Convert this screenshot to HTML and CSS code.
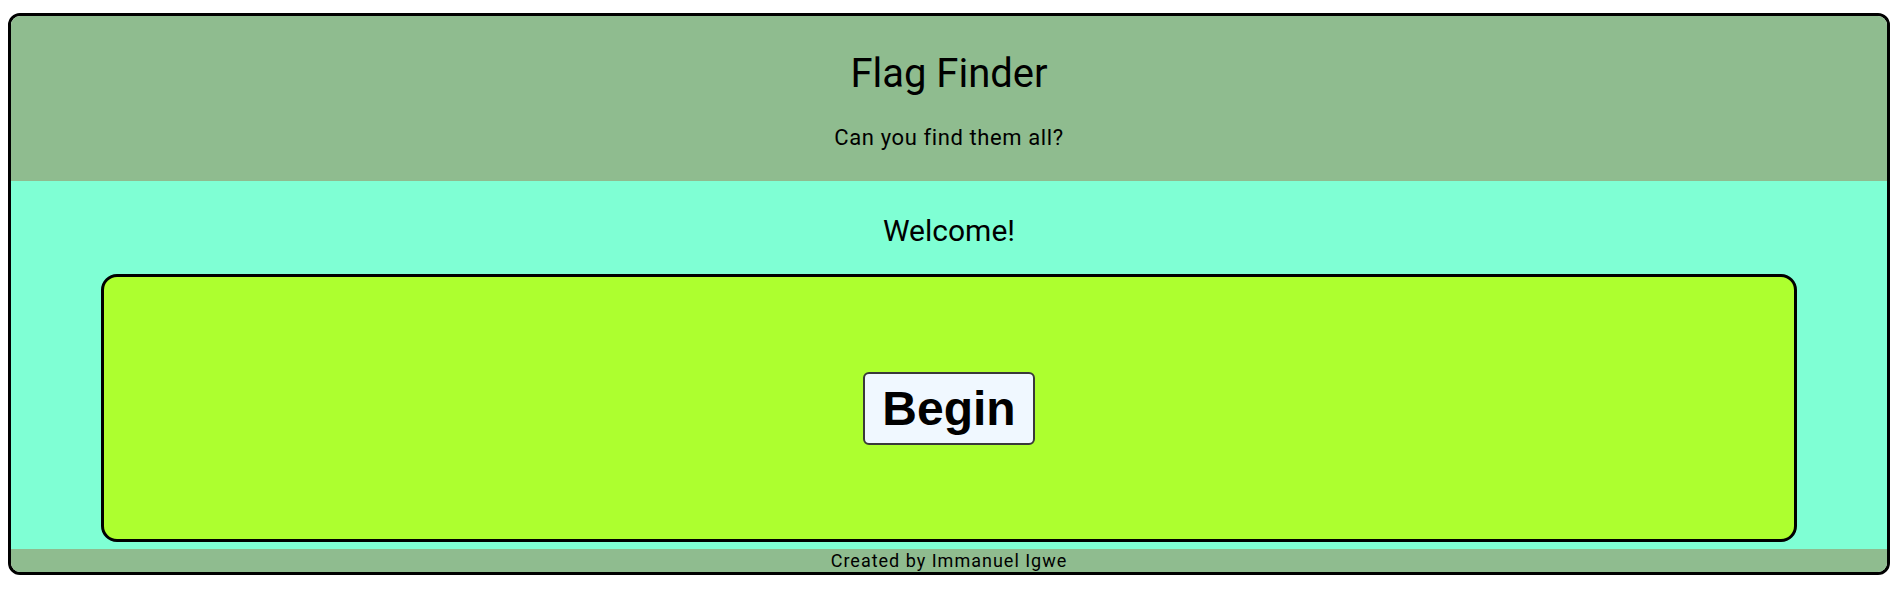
FILE: index.html
```html
<!DOCTYPE html>
<html lang="en">
<head>
<meta charset="utf-8">
<title>Flag Finder</title>
<link rel="stylesheet" href="styles.css">
</head>
<body>
<div class="app">
  <header class="header">
    <h1 class="title">Flag Finder</h1>
    <p class="subtitle">Can you find them all?</p>
  </header>
  <main class="main">
    <h2 class="welcome">Welcome!</h2>
    <section class="stage">
      <button class="begin" type="button">Begin</button>
    </section>
  </main>
  <footer class="footer">Created by Immanuel Igwe</footer>
</div>
</body>
</html>
```
FILE: styles.css
```css
html, body {
  margin: 0;
  padding: 0;
  background: #ffffff;
}
body {
  padding: 13px 11px 0 8px;
  font-family: Roboto, "Liberation Sans", sans-serif;
  color: #000;
}
.app {
  border: 3px solid #000;
  border-radius: 12px;
  overflow: hidden;
  display: flex;
  flex-direction: column;
}
.header {
  background: #8FBC8F;
  padding: 34px 0 30px;
  text-align: center;
}
.title {
  margin: 0;
  font-size: 40px;
  line-height: 48px;
  font-weight: 400;
}
.subtitle {
  margin: 27px 0 0;
  font-size: 22px;
  line-height: 26px;
  letter-spacing: 0.6px;
}
.main {
  background: #7FFFD4;
  padding: 33px 90px 7px;
  display: flex;
  flex-direction: column;
  gap: 26px;
}
.welcome {
  margin: 0;
  text-align: center;
  font-size: 30px;
  line-height: 34px;
  font-weight: 400;
}
.stage {
  background: #ADFF2F;
  border: 3px solid #000;
  border-radius: 16px;
  height: 262px;
  display: flex;
  align-items: center;
  justify-content: center;
}
.begin {
  font-family: "Liberation Sans", Arial, sans-serif;
  font-weight: 700;
  font-size: 48px;
  line-height: 55px;
  padding: 7px 17px;
  background: #F0F8FF;
  color: #000;
  border: 2px solid #3a3a3a;
  border-radius: 6px;
}
.footer {
  background: #8FBC8F;
  text-align: center;
  font-size: 18px;
  line-height: 23px;
  letter-spacing: 1px;
}
```
